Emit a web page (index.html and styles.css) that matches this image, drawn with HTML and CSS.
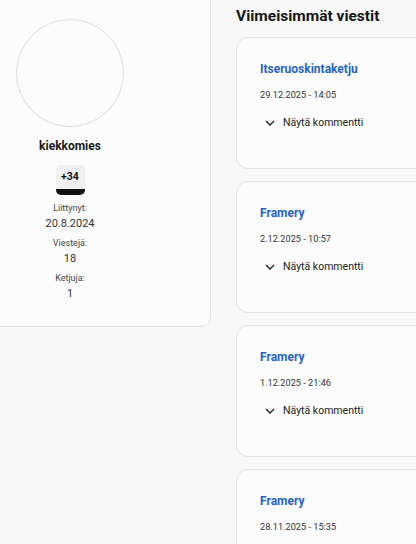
FILE: index.html
```html
<!DOCTYPE html>
<html lang="fi">
<head>
<meta charset="utf-8">
<title>kiekkomies</title>
<link rel="stylesheet" href="styles.css">
</head>
<body>
<div class="page">
  <aside class="profile">
    <div class="avatar"></div>
    <div class="name">kiekkomies</div>
    <div class="rep"><span class="rep-num">+34</span><span class="rep-bar"></span></div>
    <dl class="stats">
      <div class="stat"><dt>Liittynyt:</dt><dd>20.8.2024</dd></div>
      <div class="stat"><dt>Viestejä:</dt><dd>18</dd></div>
      <div class="stat"><dt>Ketjuja:</dt><dd>1</dd></div>
    </dl>
  </aside>
  <main class="posts">
    <h2 class="posts-title">Viimeisimmät viestit</h2>
    <article class="post">
      <a class="post-title">Itseruoskintaketju</a>
      <div class="post-date">29.12.2025 - 14:05</div>
      <button class="toggle"><svg viewBox="0 0 10 6" width="10" height="6"><path d="M1 1l4 4 4-4" fill="none" stroke="#222" stroke-width="1.4"/></svg><span>Näytä kommentti</span></button>
    </article>
    <article class="post">
      <a class="post-title">Framery</a>
      <div class="post-date">2.12.2025 - 10:57</div>
      <button class="toggle"><svg viewBox="0 0 10 6" width="10" height="6"><path d="M1 1l4 4 4-4" fill="none" stroke="#222" stroke-width="1.4"/></svg><span>Näytä kommentti</span></button>
    </article>
    <article class="post">
      <a class="post-title">Framery</a>
      <div class="post-date">1.12.2025 - 21:46</div>
      <button class="toggle"><svg viewBox="0 0 10 6" width="10" height="6"><path d="M1 1l4 4 4-4" fill="none" stroke="#222" stroke-width="1.4"/></svg><span>Näytä kommentti</span></button>
    </article>
    <article class="post">
      <a class="post-title">Framery</a>
      <div class="post-date">28.11.2025 - 15:35</div>
      <button class="toggle"><svg viewBox="0 0 10 6" width="10" height="6"><path d="M1 1l4 4 4-4" fill="none" stroke="#222" stroke-width="1.4"/></svg><span>Näytä kommentti</span></button>
    </article>
  </main>
</div>
</body>
</html>
```

FILE: styles.css
```css
html, body {
  margin: 0;
  padding: 0;
  background: #f8f8f8;
  font-family: Roboto, "Liberation Sans", sans-serif;
  color: #1f1f1f;
  overflow: hidden;
  height: 544px;
}

.page {
  display: grid;
  grid-template-columns: 282px 320px;
  column-gap: 25px;
  align-items: start;
  margin-left: -71px;
}

.profile {
  margin-top: -20px;
  background: #fcfcfc;
  border: 1px solid #e2e2e2;
  border-radius: 10px;
  padding: 38px 0 24px;
  display: flex;
  flex-direction: column;
  align-items: center;
}

.avatar {
  width: 106px;
  height: 106px;
  border-radius: 50%;
  border: 1px solid #dcdcdc;
  background: #fcfcfc;
}

.name {
  margin-top: 11px;
  font-size: 12px;
  font-weight: 700;
  line-height: 16px;
  color: #1a1a1a;
}

.rep {
  margin-top: 11px;
  display: flex;
  flex-direction: column;
  width: 29px;
}

.rep-num {
  background: #f1f1f1;
  border-radius: 4px 4px 0 0;
  font-size: 10.5px;
  font-weight: 700;
  line-height: 24px;
  text-align: center;
  color: #111;
}

.rep-bar {
  height: 6px;
  background: #111;
  border-radius: 0 0 5px 5px;
}

.stats {
  margin: 6px 0 0;
  display: flex;
  flex-direction: column;
  gap: 4px;
  text-align: center;
}

.stat dt {
  font-size: 9px;
  line-height: 15px;
  color: #444;
}

.stat dd {
  margin: 0;
  font-size: 11px;
  line-height: 16px;
  color: #333;
}

.posts {
  display: flex;
  flex-direction: column;
  gap: 12px;
}

.posts-title {
  margin: 6px 0 -1px;
  font-size: 15.5px;
  font-weight: 700;
  line-height: 20px;
  color: #161616;
}

.post {
  height: 132px;
  box-sizing: border-box;
  flex-shrink: 0;
  background: #fcfcfc;
  border: 1px solid #e2e2e2;
  border-radius: 12px;
  padding: 23px 0 0 23px;
  display: flex;
  flex-direction: column;
  align-items: flex-start;
}

.post-title {
  font-size: 12px;
  font-weight: 700;
  line-height: 16px;
  color: #2563c0;
}

.post-date {
  margin-top: 11px;
  font-size: 9.2px;
  line-height: 13px;
  color: #333;
}

.toggle {
  margin-top: 12px;
  display: flex;
  align-items: center;
  gap: 8px;
  padding: 0 0 0 5px;
  border: 0;
  background: none;
  font-family: inherit;
  font-size: 10.5px;
  line-height: 20px;
  color: #222;
}
```
